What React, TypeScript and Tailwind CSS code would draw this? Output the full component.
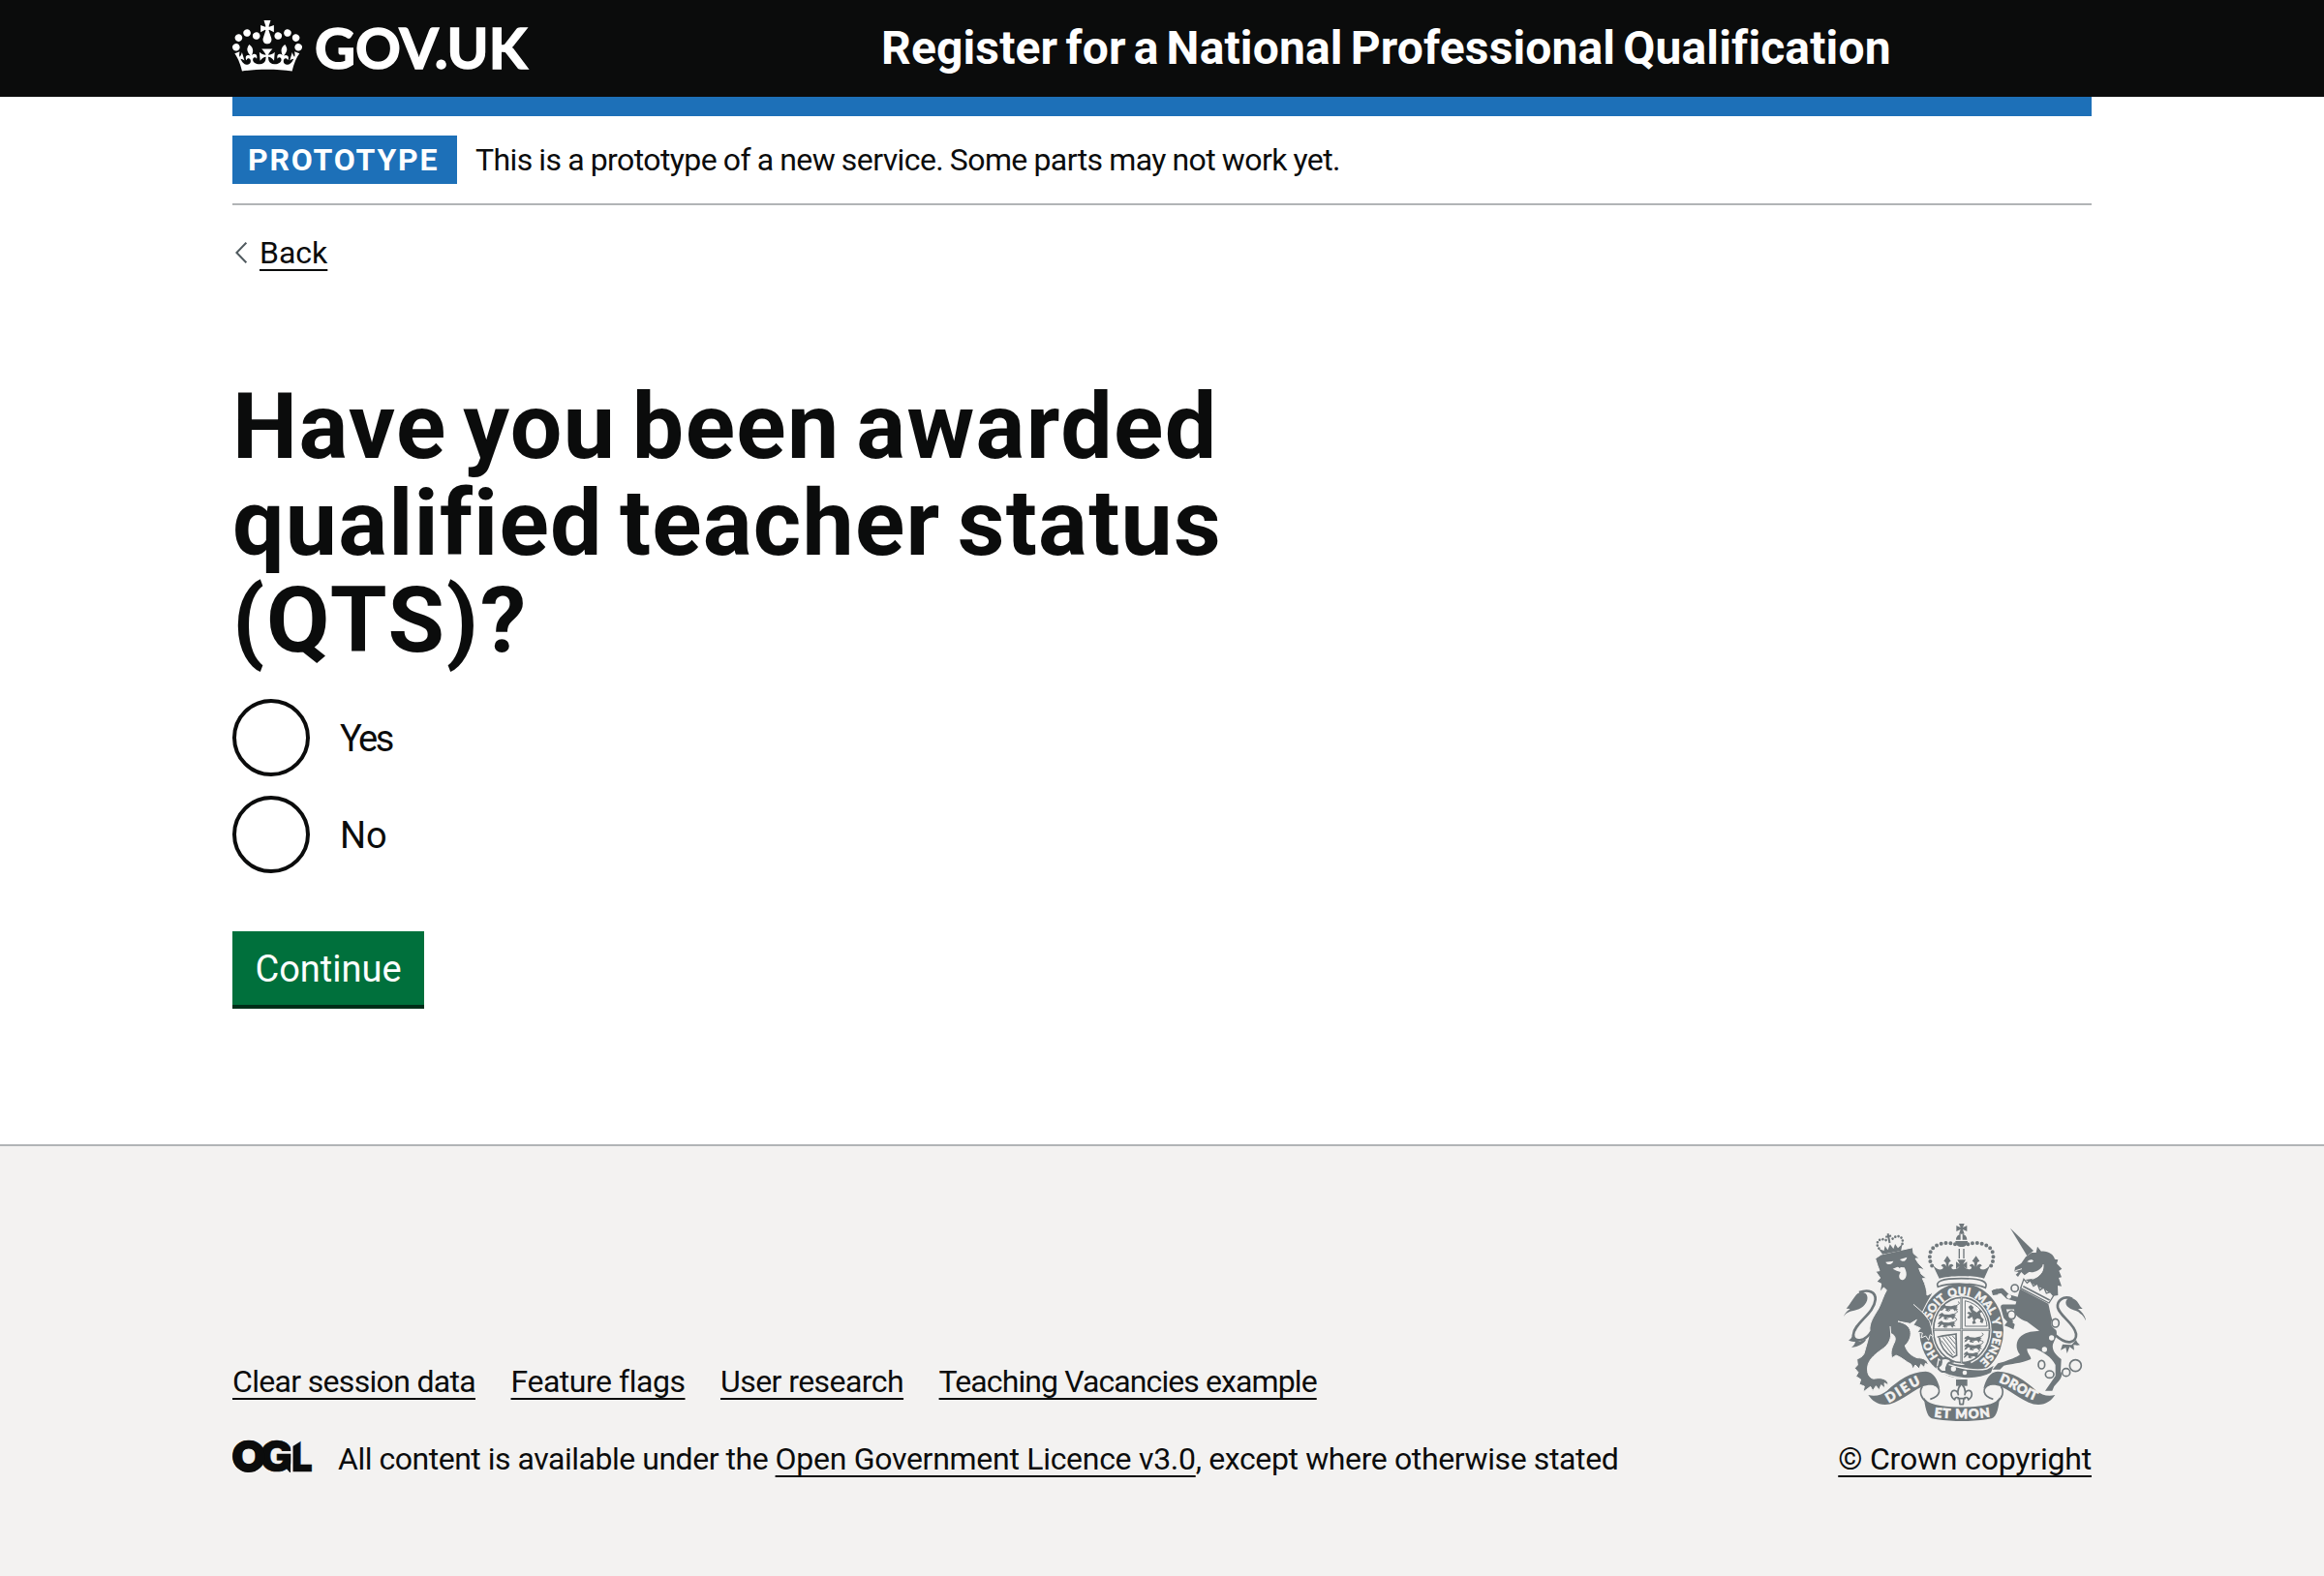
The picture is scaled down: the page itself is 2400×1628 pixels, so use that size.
function Crown() {
  return (
    <svg viewBox="0 0 132 97" className="h-[53px] w-[72px] shrink-0" fill="currentColor" aria-hidden="true">
      <path
        fillRule="evenodd"
        d="M25 30.2c3.5 1.5 7.7-.2 9.1-3.7 1.5-3.6-.2-7.8-3.9-9.2-3.6-1.4-7.6.3-9.1 3.9-1.4 3.5.3 7.5 3.9 9zM9 39.5c3.6 1.5 7.8-.2 9.2-3.7 1.5-3.6-.2-7.8-3.9-9.1-3.6-1.5-7.6.2-9.1 3.8-1.4 3.5.3 7.5 3.8 9zM4.4 57.2c3.5 1.5 7.7-.2 9.1-3.8 1.5-3.6-.2-7.7-3.9-9.1-3.5-1.5-7.6.3-9.1 3.8-1.4 3.5.3 7.6 3.9 9.1zm38.3-21.4c3.5 1.5 7.7-.2 9.1-3.8 1.5-3.6-.2-7.7-3.9-9.1-3.6-1.5-7.6.3-9.1 3.8-1.3 3.6.4 7.7 3.9 9.1zm64.4-5.6c-3.6 1.5-7.8-.2-9.1-3.7-1.5-3.6.2-7.8 3.8-9.2 3.6-1.4 7.7.3 9.2 3.9 1.3 3.5-.4 7.5-3.9 9zm15.9 9.3c-3.6 1.5-7.7-.2-9.1-3.7-1.5-3.6.2-7.8 3.7-9.1 3.6-1.5 7.7.2 9.2 3.8 1.5 3.5-.3 7.5-3.8 9zm4.7 17.7c-3.6 1.5-7.8-.2-9.2-3.8-1.5-3.6.2-7.7 3.9-9.1 3.6-1.5 7.7.3 9.2 3.8 1.3 3.5-.4 7.6-3.9 9.1zM89.3 35.8c-3.6 1.5-7.8-.2-9.2-3.8-1.4-3.6.2-7.7 3.9-9.1 3.6-1.5 7.7.3 9.2 3.8 1.4 3.6-.3 7.7-3.9 9.1zM69.7 17.7l8.9 4.7V9.3l-8.9 2.8c-.2-.3-.5-.6-.9-.9L72.4 0H59.6l3.5 11.2c-.3.3-.6.5-.9.9l-8.8-2.8v13.1l8.8-4.7c.3.3.6.7.9.9l-5 15.4v.1c-.2.8-.4 1.6-.4 2.4 0 4.1 3.1 7.5 7 8.1h.2c.3 0 .7.1 1 .1.4 0 .7 0 1-.1h.2c4-.6 7.1-4.1 7.1-8.1 0-.8-.1-1.7-.4-2.4V34l-5.1-15.4c.4-.2.7-.6 1-.9zM66 92.8c16.9 0 32.8 1.1 47.1 3.2 4-16.9 8.9-26.7 14-33.5l-9.6-3.4c1 4.9 1.1 7.2 0 10.2-1.5-1.4-3-4.3-4.2-8.7L108.6 76c2.8-2 5-3.2 7.5-3.3-4.4 9.4-10 11.9-13.6 11.2-4.3-.8-6.3-4.6-5.6-7.9 1-4.7 5.7-5.9 8-.5 4.3-8.7-3-11.4-7.6-8.8 7.1-7.2 7.9-13.5 2.1-21.1-8 6.1-8.1 12.3-4.5 20.8-4.7-5.4-12.1-2.5-9.5 6.2 3.4-5.2 7.9-2 7.2 3.1-.6 4.3-6.4 7.8-13.5 7.2-10.3-.9-10.9-8-11.2-13.8 2.5-.5 7.1 1.8 11 7.3L80.2 60c-4.1 4.4-8 5.3-12.3 5.4 1.4-4.4 8-11.6 8-11.6H55.5s6.4 7.2 7.9 11.6c-4.2-.1-8-1-12.3-5.4l1.4 16.4c3.9-5.5 8.5-7.7 10.9-7.3-.3 5.8-.9 12.8-11.1 13.8-7.2.6-12.9-2.9-13.5-7.2-.7-5 3.8-8.3 7.1-3.1 2.7-8.7-4.6-11.6-9.4-6.2 3.7-8.5 3.6-14.7-4.6-20.8-5.8 7.6-5 13.9 2.2 21.1-4.7-2.6-11.9.1-7.7 8.8 2.3-5.5 7.1-4.2 8.1.5.7 3.3-1.3 7.1-5.7 7.9-3.5.7-9-1.8-13.5-11.2 2.5.1 4.7 1.3 7.5 3.3l-4.7-15.4c-1.2 4.4-2.7 7.2-4.3 8.7-1.1-3-.9-5.3 0-10.2l-9.5 3.4c5 6.9 9.9 16.7 14 33.5 14.8-2.1 30.8-3.2 47.7-3.2z"
      />
    </svg>
  );
}

function OglLogo() {
  return (
    <svg viewBox="0 0 483 196" className="h-[33px] w-[82px] shrink-0 overflow-visible font-['Inter',sans-serif] font-black" role="img" aria-label="Open Government Licence">
      <g fill="#0b0c0c" stroke="#0b0c0c" strokeWidth="4" fontSize="260">
        <text x="-8" y="192" textLength="212" lengthAdjust="spacingAndGlyphs">O</text>
        <text x="164" y="192" textLength="206" lengthAdjust="spacingAndGlyphs">G</text>
        <text x="358" y="192" textLength="132" lengthAdjust="spacingAndGlyphs">L</text>
      </g>
      <circle cx="98" cy="98" r="73" fill="none" stroke="#0b0c0c" strokeWidth="50" />
      <polygon points="355,-10 425,-10 425,0 371,34 355,34" fill="#f3f2f1" />
      <polygon points="300,140 355,108 355,196 350,196" fill="#0b0c0c" />
      <rect x="356" y="30" width="13" height="170" fill="#f3f2f1" />
    </svg>
  );
}

const GREY = "#6f777b";
const PAPER = "#f3f2f1";

function SideRibbon() {
  return (
    <g>
      <path fill={GREY} d="M148 573C172 579 190 572 206 560 240 528 280 500 326 500 350 502 362 522 370 553 358 540 334 540 314 548 280 562 240 602 200 603 175 603 160 590 148 573Z" />
      <path fill="none" stroke={GREY} strokeWidth="5" d="M316 547C304 562 312 584 328 594M350 541C378 552 372 576 340 586" />
    </g>
  );
}

function QuarterLion() {
  return (
    <g>
      <path fill={GREY} d="M0 6l9-5 6 5 16 1 12-3 9 5-5 3 6 7-7-2-3 6-6-7-12 1-4 6-8-3 3-5-6-2-7 7-5-2 6-7-7 1Z" />
      <path fill="none" stroke={GREY} strokeWidth="3" d="M44 6C56 2 60-4 52-7M3 15l-4 6M28 18l-5 5" />
    </g>
  );
}

function RoyalArms() {
  return (
    <svg viewBox="72 42 750 612" className="h-[204px] w-[250px]" aria-hidden="true">
      <defs>
        <path id="garter" d="M437 488A99 112 0 0 1 437 264A99 112 0 0 1 437 488" />
        <path id="motto-left" d="M211 597C245 580 285 546 322 535" />
        <path id="motto-mid" d="M349 640C392 648 483 648 526 640" />
        <path id="motto-right" d="M552 533C592 546 635 582 671 592" />
      </defs>

      {/* garter */}
      <ellipse cx="437" cy="374" rx="130" ry="147" fill={GREY} />
      <ellipse cx="437" cy="372" rx="93" ry="108" fill={PAPER} />
      <ellipse cx="437" cy="372" rx="87" ry="101" fill="none" stroke={GREY} strokeWidth="5" />
      <g fill={PAPER} stroke={PAPER} strokeWidth="1.5" className="font-['Lato',sans-serif] font-black" fontSize="35" textAnchor="middle">
        <text><textPath href="#garter" startOffset="110">HO</textPath></text>
        <text><textPath href="#garter" startOffset="242">SOIT</textPath></text>
        <text><textPath href="#garter" startOffset="324">QUI</textPath></text>
        <text><textPath href="#garter" startOffset="408">MAL</textPath></text>
        <text><textPath href="#garter" startOffset="469">Y</textPath></text>
        <text><textPath href="#garter" startOffset="548">PENSE</textPath></text>
      </g>

      {/* quartered shield */}
      <path stroke={GREY} strokeWidth="7" d="M437 270V474M350 371H525" />
      <path stroke={PAPER} strokeWidth="1.5" d="M437 270V474M350 371H525" />
      <g transform="translate(374 291)"><QuarterLion /></g>
      <g transform="translate(368 317)"><QuarterLion /></g>
      <g transform="translate(366 342)"><QuarterLion /></g>
      <g transform="translate(448 388)"><QuarterLion /></g>
      <g transform="translate(448 412)"><QuarterLion /></g>
      <g transform="translate(446 437) scale(.85 1)"><QuarterLion /></g>
      <path fill="none" stroke={GREY} strokeWidth="3" d="M448 281V360H516C514 325 490 290 448 281Z" />
      <path fill={GREY} d="M458 300l8-6 8 7-2 8 12 8 10-8 8 6-8 4 4 12 8 8-4 12-8-4 2-8-10-4-8 6 4 10-10 2-2-6 4-4-4-12-10 6-6-4 8-8-8-6 6-4 8 4Z" />
      <path fill="none" stroke={GREY} strokeWidth="5" d="M362 394C380 388 398 388 420 384L422 450 410 456C390 445 372 425 368 396" />
      <path fill="none" stroke={GREY} strokeWidth="3" d="M378 394L416 444M388 392L418 430M398 391L419 416M408 389L420 402M374 404L410 450" />

      {/* belt */}
      <path fill={GREY} stroke={PAPER} strokeWidth="4" d="M366 462C400 488 480 500 515 492L540 478 530 505C480 532 405 524 360 494Z" />
      <path fill={PAPER} stroke={GREY} strokeWidth="6" d="M364 486C374 482 376 472 374 462 388 456 400 460 408 470 396 470 388 482 390 500 378 504 366 498 364 486Z" />
      <circle cx="412" cy="492" r="8" fill={PAPER} />
      <circle cx="447" cy="504" r="7" fill={PAPER} />
      <path fill={GREY} d="M438 474l28-6v10l-14 4Z" />

      {/* central crown */}
      <path fill={PAPER} d="M350 184L522 184 514 238C480 222 400 222 362 238Z" />
      <path fill={PAPER} stroke={GREY} strokeWidth="5" d="M364 238C356 222 372 212 437 212S520 222 511 241C480 226 400 224 364 238Z" />
      <path fill={GREY} d="M368 212L346 166C354 180 364 186 374 184 384 182 380 172 374 174 376 164 388 166 391 176L388 162 382 158 393 142 404 158 398 162 396 176C399 166 410 164 412 174 406 172 402 182 412 184 420 184 428 180 431 174L420 182V160L432 168 424 154H450L442 168 454 160V182L443 174C448 180 454 184 462 184 472 182 468 172 462 174 464 164 475 166 478 176L476 162 470 158 482 142 493 158 486 162 484 176C487 166 498 164 500 174 494 172 490 182 500 184 510 186 520 180 528 166L507 212C480 202 394 202 368 212Z" />
      <g fill="none" stroke={GREY} strokeWidth="12" strokeLinecap="round" strokeDasharray="0 14.5">
        <path d="M417 106C392 96 350 104 341 130 336 146 339 164 349 178" />
        <path d="M457 106C482 96 524 104 533 130 538 146 535 164 525 178" />
      </g>
      <path fill="none" stroke={GREY} strokeWidth="4" d="M430 120V150M444 120V150" />
      <path fill={GREY} d="M418 96H456C456 108 448 114 437 114S418 108 418 96Z" />
      <path fill={GREY} d="M420 92C420 82 428 75 434 75V92ZM440 75C447 75 454 82 454 92H440Z" />
      <path fill={GREY} d="M429 42H446L441 54 454 48V66L441 60 446 74H429L434 60 421 66V48L434 54Z" />

      {/* lion */}
      <path fill={GREY} stroke={PAPER} strokeWidth="3" d="M188 138L286 116 288 134 306 150 294 150 304 166 323 185 305 181 312 198 329 212 316 212C326 232 330 250 330 264L349 255 332 284 316 316 338 344 345 368 349 392 340 386 335 403 326 390 312 396 316 381 300 378 310 366 288 356 298 340 278 352 240 345C262 350 276 360 279 376 282 396 272 410 262 420 268 440 282 452 300 458 320 458 332 465 334 480L325 475 322 488 311 478 306 492 294 480 286 492 281 478C262 468 250 455 234 450L222 458C215 440 222 425 230 408 235 395 228 385 218 383 218 405 208 420 190 432 165 450 142 468 146 500 148 515 158 525 170 522 190 518 210 525 210 542L198 536 200 552 188 542 182 557 172 545 162 560 155 547 140 558 132 564 136 546 120 540 125 525 110 515 117 503 106 490 115 480 113 462C122 458 130 455 135 445 142 420 150 395 153 375 150 350 165 330 180 305 190 285 195 265 205 248L196 240 184 254 188 228 174 222 185 210 171 190 183 188 177 172 170 150Z" />
      <path fill="none" stroke={PAPER} strokeWidth="3" d="M288 292L322 322M218 384L216 360" />
      <path fill={PAPER} d="M202 161L226 158C222 170 206 172 202 161ZM246 153L268 146C266 160 252 162 246 153ZM224 182L238 176 260 178C268 192 268 206 262 212 252 222 242 214 244 202L248 192 236 188Z" />
      <path fill={GREY} d="M236 172l16-3-6 12Z" />
      <path fill="none" stroke={GREY} strokeWidth="8" d="M120 255C150 244 172 254 170 278 166 322 104 350 102 386 102 412 138 408 158 376" />
      <path fill={GREY} d="M71 332C78 316 84 312 92 306L80 305C94 290 102 270 116 258 140 248 152 266 142 286 132 306 108 312 92 314 82 318 76 322 71 332ZM98 386C98 398 90 402 86 403 94 408 102 408 108 408 106 418 100 422 96 426 118 424 136 414 142 400L120 408Z" />
      <g transform="rotate(-11 216 110)">
        <path fill={GREY} d="M188 132L178 112 194 122 200 108 206 122 216 106 224 122 232 108 238 122 254 112 246 132Z" />
        <path stroke={GREY} strokeWidth="5" d="M188 137H246" />
        <path fill="none" stroke={GREY} strokeWidth="8" strokeLinecap="round" strokeDasharray="0 10" d="M180 112C172 96 182 84 196 86L212 94M254 112C262 96 252 84 238 86L220 94" />
        <path stroke={GREY} strokeWidth="6" d="M216 72V102M207 81H225" />
      </g>

      {/* unicorn */}
      <path fill={GREY} d="M588 56L660 126 640 142Z" />
      <path fill={GREY} d="M672 113L684 128C706 126 722 138 726 152L736 154 732 166 748 182 739 188 747 208 738 210 747 236 735 234 736 264 722 266 700 250 668 234 634 216 660 212C682 205 692 190 690 170 678 190 662 194 646 192L632 202 622 192 612 207 605 200 614 192 601 190 603 177 622 165 636 145 654 132 668 132Z" />
      <path fill={PAPER} d="M640 160C648 152 656 152 660 158 652 164 646 162 640 160Z" />
      <path fill="none" stroke={PAPER} strokeWidth="3" d="M690 168C692 190 680 206 656 214M604 188L624 182" />
      <g fill="none" stroke={GREY} strokeLinejoin="round">
        <path strokeWidth="15" d="M626 300L566 300 574 330 592 350" />
        <path strokeWidth="15" d="M622 280L580 268 562 250 536 254" />
      </g>
      <path fill={GREY} d="M584 340L602 354 598 370 582 362 570 358ZM548 244L530 250 534 264 550 262Z" />
      <path fill={GREY} d="M618 244L706 290C710 306 712 322 718 340 710 354 716 362 730 372 736 386 726 402 720 416 716 434 730 450 746 462L744 500C752 512 744 522 738 530L724 546 718 560 696 560 710 540 728 514 728 480C715 455 690 440 664 430L640 430C640 445 652 452 652 462 620 476 590 476 568 482L556 494 533 494 550 475 568 470C590 462 605 458 618 448 604 430 604 405 622 390 640 375 660 376 678 374L640 346C616 336 600 326 600 308Z" />
      <path fill={PAPER} stroke={GREY} strokeWidth="4" d="M630 214L640 226 650 218 660 236 672 228 680 248 692 240 700 258 712 254 722 266 708 288 620 242Z" />
      <path fill="none" stroke={GREY} strokeWidth="5" d="M628 236L710 279" />
      <path fill="none" stroke={GREY} strokeWidth="8" d="M780 275C752 264 732 280 735 302 742 330 786 350 792 384 794 408 768 424 728 388" />
      <path fill={GREY} d="M823 344C820 326 810 316 798 306L812 306C800 296 798 280 782 274 764 268 754 284 764 298 778 312 796 310 804 320 814 326 818 334 823 344ZM792 402C794 410 800 414 804 418 794 420 788 418 784 418L786 434 772 424 764 444 760 426 744 434 750 416 778 418Z" />
      <g fill={PAPER} stroke={GREY} strokeWidth="5">
        <ellipse cx="602" cy="242" rx="11" ry="11" />
        <ellipse cx="592" cy="325" rx="12" ry="13" />
        <ellipse cx="728" cy="350" rx="11" ry="13" />
        <ellipse cx="685" cy="479" rx="10" ry="13" />
        <ellipse cx="710" cy="509" rx="13" ry="11" />
        <ellipse cx="761" cy="503" rx="12" ry="12" />
        <circle cx="790" cy="482" r="18" />
      </g>
      <g fill={PAPER}>
        <circle cx="716" cy="396" r="8" />
        <circle cx="694" cy="432" r="8" />
        <circle cx="584" cy="268" r="7" />
      </g>

      {/* motto ribbon */}
      <SideRibbon />
      <g transform="translate(875 0) scale(-1 1)"><SideRibbon /></g>
      <path fill={GREY} d="M320 580C332 600 350 602 372 606 415 612 460 612 502 606 528 602 545 598 555 580 552 610 548 640 530 646 480 657 395 657 345 646 328 640 324 605 320 580Z" />
      <path fill={GREY} d="M420 525H455V545H420Z" />
      <path fill={PAPER} stroke={GREY} strokeWidth="5" strokeLinejoin="round" d="M437 538C448 550 450 562 447 572 450 556 468 554 469 570 469 580 464 584 458 588 458 580 450 578 444 584L442 602H432L430 584C424 578 416 580 416 588 410 584 405 580 405 570 406 554 424 556 427 572 424 562 426 550 437 538ZM424 584H450" />
      <g fill={PAPER} stroke={PAPER} strokeWidth="2" className="font-['Lato',sans-serif] font-black" fontSize="40">
        <text><textPath href="#motto-left" textLength="116">DIEU</textPath></text>
        <text><textPath href="#motto-mid" startOffset="3" textLength="174">ET MON</textPath></text>
        <text><textPath href="#motto-right" textLength="128">DROIT</textPath></text>
      </g>
    </svg>
  );
}

const link = "underline decoration-2 underline-offset-[6px] [text-decoration-skip-ink:none]";

function Radio({ label, className }: { label: string; className: string }) {
  return (
    <label className="flex h-20 items-center">
      <span className="size-20 shrink-0 rounded-full border-4 border-[#0b0c0c]" />
      <span className={`pt-0.5 pl-[31px] text-[38px] ${className}`}>{label}</span>
    </label>
  );
}

export default function App() {
  return (
    <div className="flex min-h-[1628px] flex-col bg-white font-['Roboto',sans-serif] text-[32px] leading-10 text-[#0b0c0c]">
      <header className="flex h-[100px] bg-[#0b0c0c] px-60 text-white">
        <div className="flex w-[670px] pt-[21px]">
          <Crown />
          <span className="-mt-1 ml-[13px] font-['Lato',sans-serif] text-[58px] leading-[64px] font-bold [-webkit-text-stroke:1.5px_white]">GOV.UK</span>
        </div>
        <span className="mt-[20px] text-[48px] leading-[60px] font-bold tracking-[0.14px] [word-spacing:-4px]">
          Register for a National Professional Qualification
        </span>
      </header>

      <div className="mx-60">
        <div className="h-5 bg-[#1d70b8]" />
        <div className="flex items-center border-b-2 border-[#b1b4b6] py-5">
          <strong className="flex h-[50px] w-[232px] items-center bg-[#1d70b8] pl-4 font-bold tracking-[1.8px] text-white">PROTOTYPE</strong>
          <span className="ml-[19px] tracking-[-0.6px] [word-spacing:-0.6px]">This is a prototype of a new service. Some parts may not work yet.</span>
        </div>
        <a className="mt-[29px] flex items-center">
          <svg viewBox="0 0 12 22" className="ml-[3px] h-[22px] w-3" fill="none" stroke="#505a5f" strokeWidth="2">
            <path d="M11.3.7 1.4 11l9.9 10.3" />
          </svg>
          <span className={`ml-[13px] ${link}`}>Back</span>
        </a>
      </div>

      <main className="mx-60 mt-[110px] flex-1">
        <h1 className="text-[95px] leading-[100px] font-bold">
          <span className="block tracking-[1.4px] [word-spacing:-8.5px]">Have you been awarded</span>
          <span className="block tracking-[1.2px] [word-spacing:-7.5px]">qualified teacher status</span>
          <span className="block tracking-[1.8px]">(QTS)?</span>
        </h1>
        <div className="mt-[31px] flex flex-col gap-5">
          <Radio label="Yes" className="tracking-[-2.5px]" />
          <Radio label="No" className="" />
        </div>
        <button className="mt-[60px] flex h-20 w-[198px] justify-center border-b-4 border-[#002d18] bg-[#00703c] text-[38px] leading-[78px] text-white">
          Continue
        </button>
      </main>

      <footer className="flex h-[446px] justify-between border-t-2 border-[#b1b4b6] bg-[#f3f2f1] px-60">
        <div className="flex flex-col pt-[223px]">
          <div className="flex gap-[36.5px]">
            <a className={`${link} tracking-[-0.68px]`}>Clear session data</a>
            <a className={`${link} tracking-[-0.47px]`}>Feature flags</a>
            <a className={`${link} tracking-[-0.56px]`}>User research</a>
            <a className={`${link} tracking-[-0.9px]`}>Teaching Vacancies example</a>
          </div>
          <div className="mt-10 flex">
            <div className="pt-px">
              <OglLogo />
            </div>
            <p className="ml-[27px] whitespace-pre">
              <span className="tracking-[-0.48px]">All content is available under the </span>
              <a className={`${link} tracking-[-0.29px]`}>Open Government Licence v3.0</a>
              <span className="tracking-[-0.38px]">, except where otherwise stated</span>
            </p>
          </div>
        </div>
        <div className="flex flex-col items-center pt-20">
          <RoyalArms />
          <a className={`mt-[19px] ${link} tracking-[-0.19px]`}>© Crown copyright</a>
        </div>
      </footer>
    </div>
  );
}
